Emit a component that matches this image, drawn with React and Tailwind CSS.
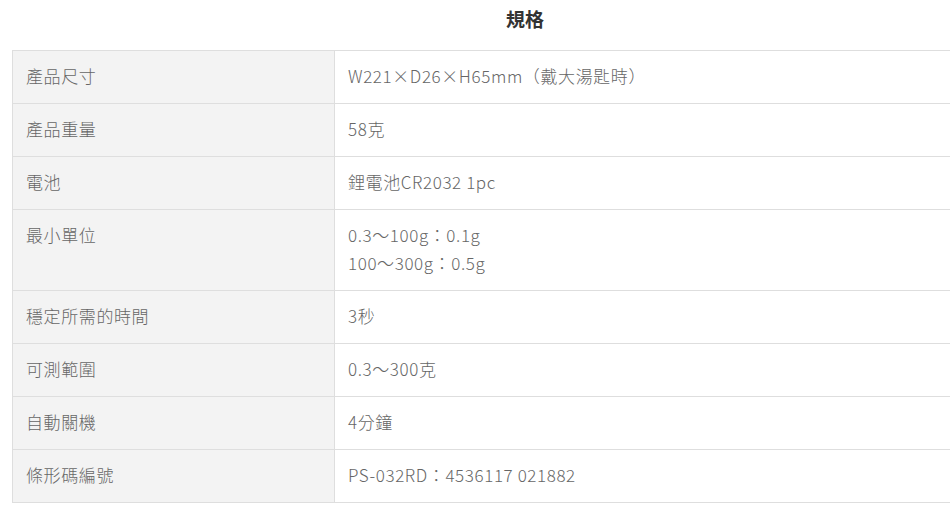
import React from 'react';

const rows = [
    ['產品尺寸', ['W221×D26×H65mm（戴大湯匙時）']],
    ['產品重量', ['58克']],
    ['電池', ['鋰電池CR2032 1pc']],
    ['最小單位', ['0.3～100g：0.1g', '100～300g：0.5g']],
    ['穩定所需的時間', ['3秒']],
    ['可測範圍', ['0.3～300克']],
    ['自動關機', ['4分鐘']],
    ['條形碼編號', ['PS-032RD：4536117 021882']],
];

const App = () => {
    return (
        <div
            className="bg-white w-[950px] h-[505px] overflow-hidden"
            style={{ fontFamily: '"Noto Sans CJK TC", "Noto Sans", sans-serif' }}
        >
            <div className="ml-3 w-[1026px]">
                <h2 className="text-center text-[19px] font-bold text-[#333] leading-[28px] pt-[5px] pb-[17px]">
                    規格
                </h2>
                <table className="w-full border-collapse text-[17px] font-light tracking-[0.6px] text-[#666] leading-[28px]">
                    <tbody>
                        {rows.map(([label, values]) => (
                            <tr key={label}>
                                <td className="w-[322px] bg-[#f3f3f3] border border-[#dedede] px-[13px] pt-[11px] pb-[13px] align-top">
                                    {label}
                                </td>
                                <td className="border border-[#dedede] px-[13px] pt-[11px] pb-[13px] align-top">
                                    {values.map((v) => (
                                        <div key={v}>{v}</div>
                                    ))}
                                </td>
                            </tr>
                        ))}
                    </tbody>
                </table>
            </div>
        </div>
    );
};

export default App;
